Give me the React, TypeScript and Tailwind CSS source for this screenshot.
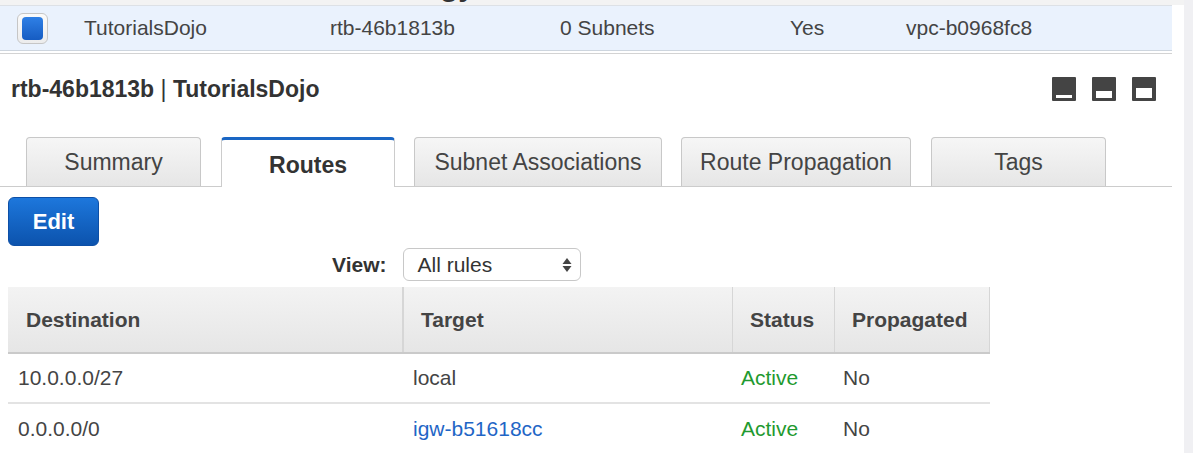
import React from 'react';

const tabs = [
  { label: 'Summary', w: 'w-[175px]', ml: 'ml-[26px]' },
  { label: 'Routes', w: 'w-[174px]', ml: 'ml-[20px]', active: true },
  { label: 'Subnet Associations', w: 'w-[248px]', ml: 'ml-[19px]' },
  { label: 'Route Propagation', w: 'w-[230px]', ml: 'ml-[19px]' },
  { label: 'Tags', w: 'w-[175px]', ml: 'ml-[20px]' },
];

const routes = [
  { dest: '10.0.0.0/27', target: 'local', link: false, status: 'Active', propagated: 'No' },
  { dest: '0.0.0.0/0', target: 'igw-b51618cc', link: true, status: 'Active', propagated: 'No' },
];

function PanelIcon({ bar }: { bar: number }) {
  return (
    <svg width="24" height="24" viewBox="0 0 24 24">
      <rect x="0" y="0" width="24" height="24" rx="1" fill="#444" />
      <rect x="4" y={21 - bar} width="16" height={bar} fill="#fff" />
    </svg>
  );
}

export default function App() {
  return (
    <div className="flex h-[453px] w-full overflow-hidden bg-white text-[#444]" style={{ fontFamily: '"Liberation Sans", Arial, sans-serif' }}>
      <div className="w-[1184px] flex-none">
        {/* clipped heading from the section above */}
        <div className="h-[5px] overflow-hidden bg-[#f3f3f3] pl-[440px]">
          <div className="-mt-[29px] text-[30px] font-bold leading-[30px] text-[#333]">gy</div>
        </div>

        {/* selected route table row */}
        <div className="w-[1172px] border-t border-[#dde1e6]">
          <div className="flex h-[45px] items-center border-b border-[#cdd5de] bg-[#eaf2fd] text-[21px]">
            <div className="ml-[17px] flex h-[31px] w-[31px] items-center justify-center rounded-[6px] border border-[#c6c6c6] bg-gradient-to-b from-[#fbfbfb] to-[#ececec]">
              <div className="h-[23px] w-[21px] rounded-[4px] bg-gradient-to-b from-[#2f80e6] to-[#165cc2]" />
            </div>
            <span className="ml-[36px] w-[246px]">TutorialsDojo</span>
            <span className="w-[230px]">rtb-46b1813b</span>
            <span className="w-[230px]">0 Subnets</span>
            <span className="w-[116px]">Yes</span>
            <span>vpc-b0968fc8</span>
          </div>
          <div className="mt-[2px] h-px bg-[#d3d3d3]" />
        </div>

        {/* detail header */}
        <div className="mt-[22px] flex h-[26px] w-[1172px] items-center justify-between pl-[11px] pr-[16px]">
          <h2 className="text-[23px] font-bold text-[#333]">
            rtb-46b1813b <span className="font-normal">|</span> TutorialsDojo
          </h2>
          <div className="flex gap-[16px]">
            <PanelIcon bar={3} />
            <PanelIcon bar={7} />
            <PanelIcon bar={10} />
          </div>
        </div>

        {/* tabs */}
        <div className="mt-[35px] flex h-[50px] w-[1172px] items-stretch border-b border-[#cccccc]">
          {tabs.map((t) =>
            t.active ? (
              <div
                key={t.label}
                className={`${t.w} ${t.ml} -mb-px flex items-center justify-center rounded-t-[4px] border-x border-t-[3px] border-[#cccccc] border-t-[#1a66c4] bg-white pt-[4px] text-[23px] font-bold text-[#333]`}
              >
                {t.label}
              </div>
            ) : (
              <div
                key={t.label}
                className={`${t.w} ${t.ml} flex items-center justify-center rounded-t-[4px] border-x border-t border-[#c8c8c8] bg-gradient-to-b from-[#f6f6f6] to-[#e6e6e6] text-[23px]`}
              >
                {t.label}
              </div>
            )
          )}
        </div>

        {/* actions */}
        <div className="pl-[8px] pt-[10px]">
          <button className="flex h-[49px] w-[91px] items-center justify-center rounded-[6px] border border-[#0d4fa6] bg-gradient-to-b from-[#1d77dc] to-[#0c53ad] text-[22px] font-bold text-white">
            Edit
          </button>
        </div>

        <div className="mt-[2px] flex h-[33px] items-center">
          <span className="ml-[332px] text-[21px] font-bold text-[#333]">View:</span>
          <div className="ml-[17px] flex h-[33px] w-[178px] items-center justify-between rounded-[6px] border border-[#c8c8c8] bg-white pl-[13px] pr-[8px] text-[21px] text-[#333]">
            <span>All rules</span>
            <svg width="10" height="16" viewBox="0 0 10 16">
              <path d="M5 1 L9.5 7 L0.5 7 Z" fill="#444" />
              <path d="M5 15 L9.5 9 L0.5 9 Z" fill="#444" />
            </svg>
          </div>
        </div>

        {/* routes table */}
        <div className="ml-[8px] mt-[6px] w-[982px] text-[21px]">
          <div className="grid h-[67px] grid-cols-[394px_330px_102px_156px] border-b-2 border-[#cacaca] bg-gradient-to-b from-[#f3f3f3] to-[#e6e6e6] font-bold">
            <div className="flex items-center pl-[18px]">Destination</div>
            <div className="flex items-center border-l-2 border-[#d6d6d6] pl-[17px]">Target</div>
            <div className="flex items-center border-l border-[#d6d6d6] pl-[17px]">Status</div>
            <div className="flex items-center border-x border-[#d6d6d6] pl-[17px]">Propagated</div>
          </div>
          {routes.map((r, i) => (
            <div
              key={r.dest}
              className={`grid h-[50px] grid-cols-[394px_330px_102px_156px] items-center ${i === 0 ? 'border-b-2 border-[#e3e3e3]' : ''}`}
            >
              <div className="pl-[10px]">{r.dest}</div>
              <div className="pl-[11px]">
                {r.link ? <span className="text-[#1f66c6]">{r.target}</span> : r.target}
              </div>
              <div className="pl-[9px] text-[#1f9a30]">{r.status}</div>
              <div className="pl-[9px]">{r.propagated}</div>
            </div>
          ))}
        </div>
      </div>
      <div className="flex-1 bg-[#f0f0f3]" />
    </div>
  );
}
